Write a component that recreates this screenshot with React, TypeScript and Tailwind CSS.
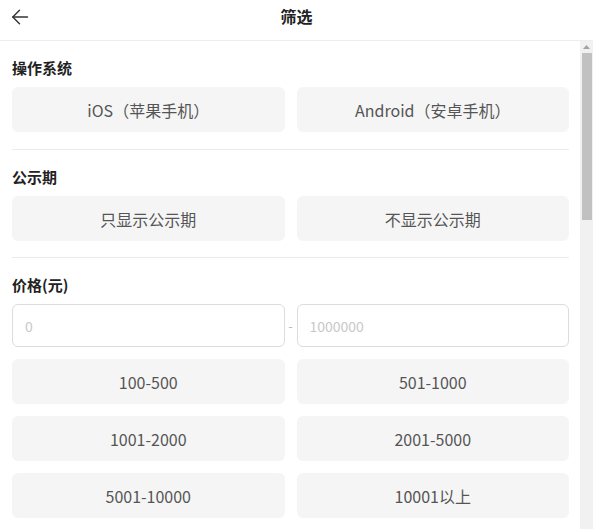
import React from 'react'

const font = { fontFamily: '"Noto Sans CJK SC", "Noto Sans", sans-serif' }

function OptionButton({ label }: { label: string }) {
  return (
    <button className="h-[45px] rounded-md bg-[#f5f5f5] text-[16px] text-[#555] flex items-center justify-center">
      {label}
    </button>
  )
}

function Section({ title, children, className = '' }: { title: string; children: React.ReactNode; className?: string }) {
  return (
    <div className={`pt-4 ${className}`}>
      <h3 className="text-[15px] leading-[21px] font-bold text-[#222] mb-[9px]">{title}</h3>
      {children}
    </div>
  )
}

export default function App() {
  const ranges = ['100-500', '501-1000', '1001-2000', '2001-5000', '5001-10000', '10001以上']

  return (
    <div className="h-[529px] w-[593px] overflow-hidden bg-white flex flex-col" style={font}>
      {/* Header */}
      <div className="h-[41px] shrink-0 border-b border-[#ededed] flex items-start pt-[5px] relative">
        <svg className="ml-[11px] mt-[3px]" width="18" height="18" viewBox="0 0 18 18" fill="none" stroke="#333" strokeWidth="1.4" strokeLinecap="round" strokeLinejoin="round">
          <path d="M16.5 9H1.8" />
          <path d="M8.5 2.2 1.8 9l6.7 6.8" />
        </svg>
        <h1 className="absolute left-0 right-0 top-[5px] text-center text-[16px] leading-[22px] font-bold text-[#222] pointer-events-none">筛选</h1>
      </div>

      <div className="flex flex-1 min-h-0">
        {/* Content */}
        <div className="flex-1 pl-3 pr-[11px]">
          <Section title="操作系统" className="pb-[17px] border-b border-[#ececec]">
            <div className="grid grid-cols-2 gap-3">
              <OptionButton label="iOS（苹果手机）" />
              <OptionButton label="Android（安卓手机）" />
            </div>
          </Section>

          <Section title="公示期" className="pb-4 border-b border-[#ececec]">
            <div className="grid grid-cols-2 gap-3">
              <OptionButton label="只显示公示期" />
              <OptionButton label="不显示公示期" />
            </div>
          </Section>

          <Section title="价格(元)">
            <div className="flex items-center mt-[2px]">
              <input
                className="flex-1 min-w-0 h-[43px] rounded-md border border-[#dcdcdc] px-3 text-[14px] text-[#333] placeholder:text-[#c8c8c8] outline-none"
                placeholder="0"
              />
              <span className="w-3 text-center text-[13px] text-[#bbb]">-</span>
              <input
                className="flex-1 min-w-0 h-[43px] rounded-md border border-[#dcdcdc] px-3 text-[14px] text-[#333] placeholder:text-[#c8c8c8] outline-none"
                placeholder="1000000"
              />
            </div>
            <div className="grid grid-cols-2 gap-3 mt-3">
              {ranges.map((r) => (
                <OptionButton key={r} label={r} />
              ))}
            </div>
          </Section>
        </div>

        {/* Scrollbar */}
        <div className="w-[13px] shrink-0 bg-[#f1f1f1] flex flex-col">
          <div className="h-3 flex items-center justify-center">
            <svg width="7" height="4" viewBox="0 0 7 4">
              <path d="M3.5 0 7 4H0z" fill="#a3a3a3" />
            </svg>
          </div>
          <div className="ml-[2px] mr-[1px] h-[167px] bg-[#c1c1c1]" />
        </div>
      </div>
    </div>
  )
}
